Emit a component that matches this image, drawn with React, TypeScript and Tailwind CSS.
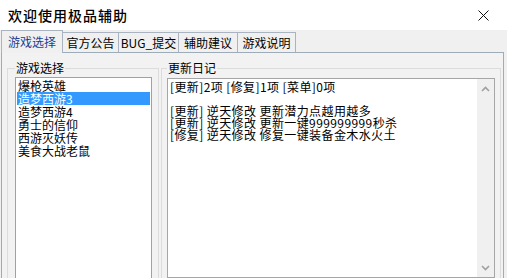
const games = ["爆枪英雄", "造梦西游3", "造梦西游4", "勇士的信仰", "西游灭妖传", "美食大战老鼠"];

const tabs = [
  { label: "游戏选择", w: "w-[62px]" },
  { label: "官方公告", w: "w-[56px]" },
  { label: "BUG_提交", w: "w-[60px]" },
  { label: "辅助建议", w: "w-[59px]" },
  { label: "游戏说明", w: "w-[58px]" },
];

const log = [
  "[更新]2项 [修复]1项 [菜单]0项",
  "",
  "[更新] 逆天修改 更新潜力点越用越多",
  "[更新] 逆天修改 更新一键999999999秒杀",
  "[修复] 逆天修改 修复一键装备金木水火土",
];

function Chevron({ up }: { up?: boolean }) {
  return (
    <svg width="9" height="6" viewBox="0 0 9 6">
      <path
        d={up ? "M1 5 L4.5 1.5 L8 5" : "M1 1 L4.5 4.5 L8 1"}
        fill="none"
        stroke="#a0a0a0"
        strokeWidth="1.6"
      />
    </svg>
  );
}

export default function App() {
  return (
    <div
      className="h-[278px] w-[507px] overflow-hidden bg-[#f0f0f0] text-[12px] text-black"
      style={{ fontFamily: '"Noto Sans CJK SC", "Noto Sans", sans-serif' }}
    >
      {/* Title bar */}
      <div className="flex h-[30px] items-center justify-between bg-white pl-[8px] pr-[18px]">
        <span className="text-[14px] font-medium tracking-[1px]">欢迎使用极品辅助</span>
        <svg width="11" height="11" viewBox="0 0 11 11">
          <path d="M0.5 0.5 L10.5 10.5 M10.5 0.5 L0.5 10.5" stroke="#111" strokeWidth="1" />
        </svg>
      </div>

      {/* Tabs */}
      <div className="flex h-[22px] items-end pl-[1px]">
        {tabs.map((t, i) =>
          i === 0 ? (
            <div
              key={t.label}
              className={`relative z-10 -mb-px flex h-[23px] ${t.w} items-center justify-center border border-b-0 border-[#a9b4c0] bg-[#f0f0f0] text-[#1d3f94]`}
            >
              {t.label}
            </div>
          ) : (
            <div
              key={t.label}
              className={`flex h-[20px] ${t.w} items-center justify-center border border-b-0 border-l-0 border-[#a9b4c0] bg-[#f0f0f0] leading-none`}
            >
              {t.label}
            </div>
          )
        )}
      </div>

      {/* Panel */}
      <div className="ml-[1px] flex w-[503px] gap-[2px] border border-[#9eabb9] bg-[#f2f2f2] pl-[5px] pr-[2px] pt-[8px]">
        <fieldset className="w-[152px] border border-[#dcdcdc] pl-[7px] pr-[6px]">
          <legend className="px-[1px] leading-[14px]">游戏选择</legend>
          <div className="mt-[2px] h-[210px] border border-[#84a6cf] bg-white p-[1px]">
            {games.map((g, i) => (
              <div
                key={g}
                className={`h-[13px] pl-[1px] leading-[13px] ${i === 1 ? "bg-[#3399ff] text-white" : ""}`}
              >
                {g}
              </div>
            ))}
          </div>
        </fieldset>

        <fieldset className="w-[340px] border border-[#dcdcdc] px-[5px]">
          <legend className="px-[1px] leading-[14px]">更新日记</legend>
          <div className="mt-[3px] flex h-[200px] border border-[#a6a6a6] bg-white">
            <div className="flex-1 pl-[2px] pt-[2px] leading-[12px] tracking-[0.4px] whitespace-pre">
              {log.map((l, i) => (
                <div key={i} className="h-[12px]">
                  {l}
                </div>
              ))}
            </div>
            <div className="flex w-[17px] flex-col items-center justify-between bg-[#f0f0f0] pb-[6px] pt-[7px]">
              <Chevron up />
              <Chevron />
            </div>
          </div>
        </fieldset>
      </div>
    </div>
  );
}
